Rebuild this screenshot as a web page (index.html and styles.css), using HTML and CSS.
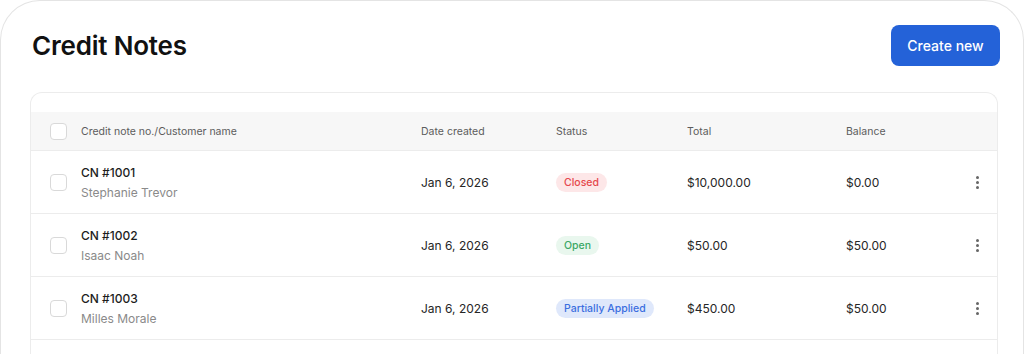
FILE: index.html
```html
<!DOCTYPE html>
<html lang="en">
<head>
    <meta charset="UTF-8">
    <meta name="viewport" content="width=device-width, initial-scale=1.0">
    <title>Credit Notes</title>
    <link rel="stylesheet" href="styles.css">
</head>
<body>
    <div class="panel">
        <div class="page-head">
            <h1>Credit Notes</h1>
            <button class="btn-primary">Create new</button>
        </div>

        <div class="card">
            <div class="row head">
                <span class="check"></span>
                <span>Credit note no./Customer name</span>
                <span>Date created</span>
                <span>Status</span>
                <span>Total</span>
                <span>Balance</span>
                <span></span>
            </div>

            <div class="row">
                <span class="check"></span>
                <div class="who">
                    <div class="num">CN #1001</div>
                    <div class="name">Stephanie Trevor</div>
                </div>
                <span>Jan 6, 2026</span>
                <span><span class="badge closed">Closed</span></span>
                <span>$10,000.00</span>
                <span>$0.00</span>
                <span class="more"><i></i><i></i><i></i></span>
            </div>

            <div class="row">
                <span class="check"></span>
                <div class="who">
                    <div class="num">CN #1002</div>
                    <div class="name">Isaac Noah</div>
                </div>
                <span>Jan 6, 2026</span>
                <span><span class="badge open">Open</span></span>
                <span>$50.00</span>
                <span>$50.00</span>
                <span class="more"><i></i><i></i><i></i></span>
            </div>

            <div class="row">
                <span class="check"></span>
                <div class="who">
                    <div class="num">CN #1003</div>
                    <div class="name">Milles Morale</div>
                </div>
                <span>Jan 6, 2026</span>
                <span><span class="badge partial">Partially Applied</span></span>
                <span>$450.00</span>
                <span>$50.00</span>
                <span class="more"><i></i><i></i><i></i></span>
            </div>

            <div class="row empty"></div>
        </div>
    </div>
</body>
</html>
```

FILE: styles.css
```css
body {
    font-family: Inter, "Liberation Sans", sans-serif;
    margin: 0;
    background-color: #ffffff;
    color: #222222;
    overflow: hidden;
}
.panel {
    border: 1px solid #e4e4e4;
    border-bottom: none;
    border-radius: 40px 40px 0 0;
    padding: 0 25px 0 29px;
    height: 400px;
}
.page-head {
    display: flex;
    justify-content: space-between;
    align-items: center;
    padding-top: 24px;
    margin-right: -2px;
}
h1 {
    margin: 0 0 0 2px;
    font-size: 26px;
    font-weight: 600;
    letter-spacing: -0.2px;
    color: #111111;
}
.btn-primary {
    background-color: #2462d8;
    color: #ffffff;
    border: none;
    border-radius: 8px;
    width: 109px;
    height: 41px;
    font-family: inherit;
    font-size: 14px;
    font-weight: 500;
}
.card {
    margin-top: 26px;
    border: 1px solid #ececec;
    border-bottom: none;
    border-radius: 12px 12px 0 0;
    padding-top: 19px;
}
.row {
    display: grid;
    grid-template-columns: 31px 340px 135px 131px 159px 1fr auto;
    align-items: center;
    height: 62px;
    padding-left: 19px;
    border-bottom: 1px solid #ececec;
    font-size: 12px;
    color: #262626;
}
.row.head {
    height: 38px;
    background-color: #f7f7f7;
    font-size: 10.5px;
    color: #5c5c5c;
}
.row.empty {
    border-bottom: none;
}
.check {
    width: 15px;
    height: 15px;
    border: 1px solid #d9d9d9;
    border-radius: 4px;
    background-color: #ffffff;
}
.who {
    display: flex;
    flex-direction: column;
    gap: 5px;
}
.num {
    font-weight: 500;
    color: #1d1d1d;
}
.name {
    color: #8a8a8a;
}
.badge {
    display: inline-block;
    padding: 3px 8px;
    border-radius: 10px;
    font-size: 10.5px;
    font-weight: 500;
}
.closed {
    background-color: #fde7e8;
    color: #e5484d;
}
.open {
    background-color: #e9f7ee;
    color: #3ca866;
}
.partial {
    background-color: #dfe8fb;
    color: #3b6ee0;
}
.more {
    display: flex;
    flex-direction: column;
    gap: 2px;
    margin-right: 18px;
}
.more i {
    width: 3px;
    height: 3px;
    border-radius: 50%;
    background-color: #666666;
}
```
